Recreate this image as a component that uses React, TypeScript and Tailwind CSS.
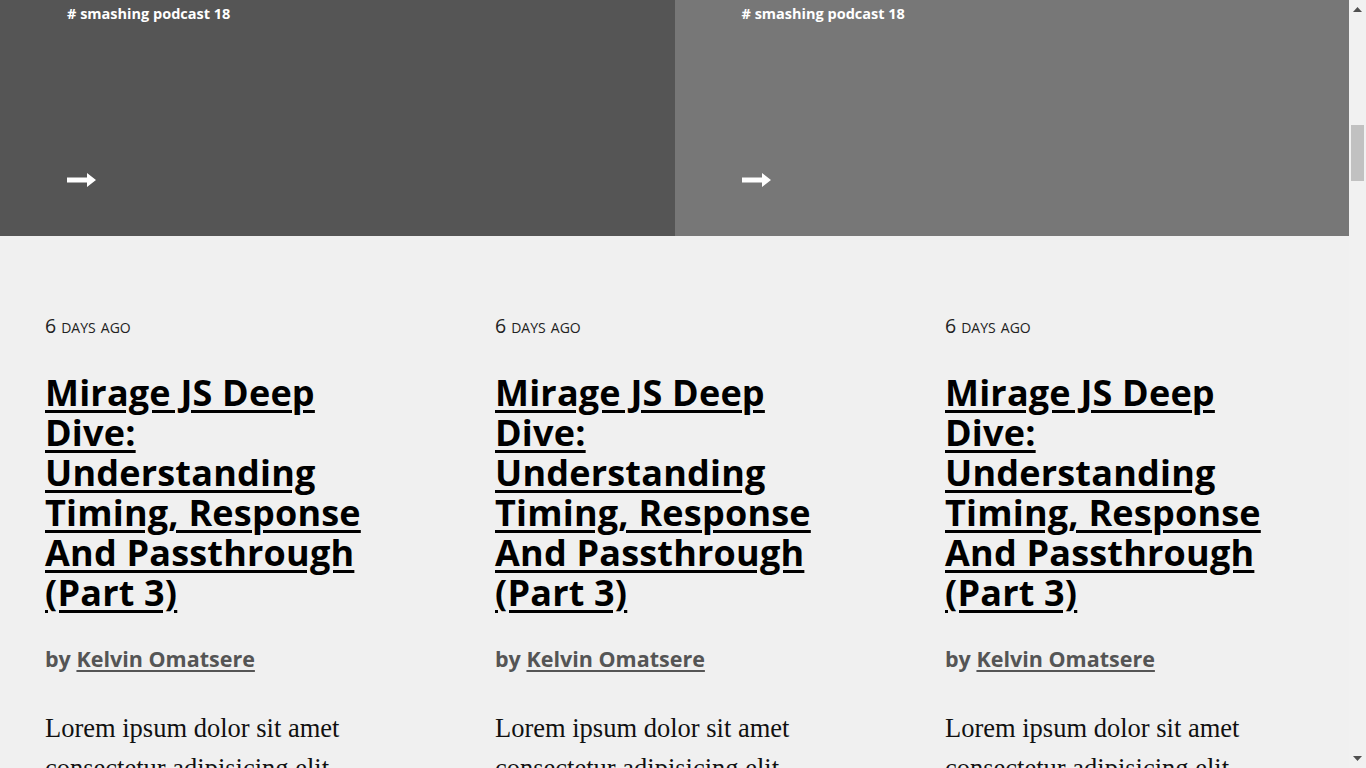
import React from "react";

const Arrow = () => (
  <svg width="30" height="16" viewBox="0 0 30 16" className="block">
    <path d="M0 5.5 H20 V1 L29 8 L20 15 V10.5 H0 Z" fill="#ffffff" />
  </svg>
);

const Panel = ({ bg }: { bg: string }) => (
  <div className={`flex-1 h-[236px] ${bg} pl-[67px] pt-[4px] pb-[48px] flex flex-col justify-between`}>
    <div className="text-white font-bold text-[14.5px] leading-[20px] [font-family:'Open_Sans',sans-serif]">
      # smashing podcast 18
    </div>
    <Arrow />
  </div>
);

const Card = () => (
  <div className="w-[360px] shrink-0">
    <div className="text-[#222] [font-family:'Open_Sans',sans-serif] text-[19.5px] leading-[20px] [font-variant:small-caps]">
      6 days ago
    </div>
    <h2 className="mt-[37px] text-[36px] leading-[40px] font-bold text-black [font-family:'Open_Sans',sans-serif] tracking-[0.2px]">
      <a href="#" className="underline decoration-[3px] underline-offset-[4px]">
        Mirage JS Deep
        <br />
        Dive:
        <br />
        Understanding
        <br />
        Timing, Response
        <br />
        And Passthrough
        <br />
        (Part 3)
      </a>
    </h2>
    <div className="mt-[32px] text-[21.5px] leading-[28px] font-bold text-[#555] [font-family:'Open_Sans',sans-serif]">
      by{" "}
      <a href="#" className="underline decoration-[2px] underline-offset-[3px]">
        Kelvin Omatsere
      </a>
    </div>
    <p className="mt-[35px] text-[26.5px] leading-[40px] text-[#111] [font-family:'Liberation_Serif',serif]">
      Lorem ipsum dolor sit amet consectetur adipisicing elit.
    </p>
  </div>
);

export default function App() {
  return (
    <div className="w-[1366px] h-[768px] overflow-hidden flex bg-[#f0f0f0]">
      <div className="flex-1 min-w-0 flex flex-col">
        <div className="flex">
          <Panel bg="bg-[#555555]" />
          <Panel bg="bg-[#777777]" />
        </div>
        <div className="flex gap-[90px] pl-[45px] pt-[80px]">
          <Card />
          <Card />
          <Card />
        </div>
      </div>
      <div className="w-[17px] shrink-0 bg-[#f1f1f1] flex flex-col items-center relative">
        <svg width="9" height="5" viewBox="0 0 9 5" className="mt-[7px]">
          <path d="M0 5 L4.5 0 L9 5 Z" fill="#505050" />
        </svg>
        <div className="mt-[113px] w-[13px] h-[56px] bg-[#c1c1c1]" />
        <div className="flex-1" />
        <svg width="9" height="5" viewBox="0 0 9 5" className="mb-[7px]">
          <path d="M0 0 L9 0 L4.5 5 Z" fill="#505050" />
        </svg>
      </div>
    </div>
  );
}
